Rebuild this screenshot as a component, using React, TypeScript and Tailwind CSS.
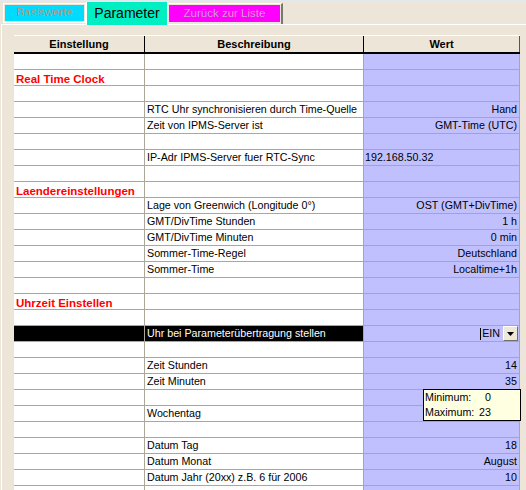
import React from 'react';

type Row =
  | { kind: 'empty' }
  | { kind: 'section'; label: string }
  | { kind: 'item'; label: string; value?: string; left?: boolean }
  | { kind: 'select'; label: string; value: string };

const rows: Row[] = [
  { kind: 'empty' },
  { kind: 'section', label: 'Real Time Clock' },
  { kind: 'empty' },
  { kind: 'item', label: 'RTC Uhr synchronisieren durch Time-Quelle', value: 'Hand' },
  { kind: 'item', label: 'Zeit von IPMS-Server ist', value: 'GMT-Time (UTC)' },
  { kind: 'empty' },
  { kind: 'item', label: 'IP-Adr IPMS-Server fuer RTC-Sync', value: '192.168.50.32', left: true },
  { kind: 'empty' },
  { kind: 'section', label: 'Laendereinstellungen' },
  { kind: 'item', label: 'Lage von Greenwich (Longitude 0°)', value: 'OST (GMT+DivTime)' },
  { kind: 'item', label: 'GMT/DivTime Stunden', value: '1 h' },
  { kind: 'item', label: 'GMT/DivTime Minuten', value: '0 min' },
  { kind: 'item', label: 'Sommer-Time-Regel', value: 'Deutschland' },
  { kind: 'item', label: 'Sommer-Time', value: 'Localtime+1h' },
  { kind: 'empty' },
  { kind: 'section', label: 'Uhrzeit Einstellen' },
  { kind: 'empty' },
  { kind: 'select', label: 'Uhr bei Parameterübertragung stellen', value: 'EIN' },
  { kind: 'empty' },
  { kind: 'item', label: 'Zeit Stunden', value: '14' },
  { kind: 'item', label: 'Zeit Minuten', value: '35' },
  { kind: 'empty' },
  { kind: 'item', label: 'Wochentag', value: '' },
  { kind: 'empty' },
  { kind: 'item', label: 'Datum Tag', value: '18' },
  { kind: 'item', label: 'Datum Monat', value: 'August' },
  { kind: 'item', label: 'Datum Jahr (20xx) z.B. 6 für 2006', value: '10' },
  { kind: 'empty' },
];

function TableRow({ row }: { row: Row }) {
  const dark = row.kind === 'select';
  const first = dark ? 'bg-black' : 'bg-white';
  const second = dark ? 'bg-black text-white' : 'bg-white text-black';

  return (
    <div className="flex h-[16px] border-b border-[#aca899]">
      <div className={`w-[131px] shrink-0 border-r border-[#aca899] pl-[2px] leading-[15px] ${first}`}>
        {row.kind === 'section' && (
          <span className="text-[11.5px] font-bold text-[#ff0000]">{row.label}</span>
        )}
      </div>
      <div className={`w-[219px] shrink-0 border-r border-[#aca899] pl-[2px] text-[10.7px] leading-[15px] whitespace-nowrap overflow-hidden ${second}`}>
        {(row.kind === 'item' || row.kind === 'select') && row.label}
      </div>
      <div className="w-[156px] shrink-0 border-r border-[#aca899] bg-[#c0c0ff] text-[10.7px] leading-[15px]">
        {row.kind === 'item' && (
          <div className={row.left ? 'pl-[1px]' : 'pr-[2px] text-right'}>{row.value}</div>
        )}
        {row.kind === 'select' && (
          <div className="flex h-full items-center justify-end pr-[1px]">
            <span className="mr-px h-[12px] w-px bg-black" />
            <span>{row.value}</span>
            <span className="ml-[3px] flex h-[15px] w-[15px] items-center justify-center border border-t-white border-l-white border-r-[#716f64] border-b-[#716f64] bg-[#ece9d8]">
              <svg width="7" height="4" viewBox="0 0 7 4">
                <polygon points="0,0 7,0 3.5,4" fill="#000" />
              </svg>
            </span>
          </div>
        )}
      </div>
    </div>
  );
}

export default function App() {
  return (
    <div
      className="relative h-[490px] w-[526px] overflow-hidden bg-[#ede5d8] text-black"
      style={{ fontFamily: '"Liberation Sans", Arial, sans-serif' }}
    >
      <div className="h-[2px] bg-[#e2e8ee]" />

      {/* tabs */}
      <div className="flex h-[22px] items-stretch">
        <div className="ml-[3px] mt-px mb-px w-[83px] border border-white p-px">
          <div className="flex h-full items-center justify-center bg-[#00dcff] text-[11.5px] text-[#a89a88]">
            Basiswerte
          </div>
        </div>
        <div className="relative z-10 -mb-px flex w-[81px] items-center justify-center border-l border-white bg-[#00efc2] text-[14px]">
          Parameter
        </div>
        <div className="mt-px w-[116px] border-t border-l border-white border-r-2 border-r-[#7a7870] p-px">
          <div className="flex h-[17px] items-center justify-center bg-[#ff00ff] text-[11.5px] text-[#d49ad0]">
            Zurück zur Liste
          </div>
        </div>
      </div>

      {/* panel */}
      <div className="ml-px border-t border-l border-white pl-[12px] pt-[10px]">
        <div className="w-[506px]">
          <div className="flex h-[19px] border-t border-white border-b-2 border-b-black text-[11px] font-bold leading-[16px]">
            <div className="w-[131px] shrink-0 border-r border-black text-center">Einstellung</div>
            <div className="w-[219px] shrink-0 border-r border-black text-center">Beschreibung</div>
            <div className="w-[156px] shrink-0 border-r border-[#555] text-center">Wert</div>
          </div>
          {rows.map((row, i) => (
            <TableRow key={i} row={row} />
          ))}
        </div>
      </div>

      {/* tooltip */}
      <div className="absolute left-[423px] top-[389px] w-[98px] border border-black bg-[#ffffe1] text-[10.7px] leading-[15px]">
        <div className="flex pl-[1px]">
          <span className="w-[46px] whitespace-nowrap">Minimum:</span>
          <span className="w-[20px] text-right">0</span>
        </div>
        <div className="flex pl-[1px]">
          <span className="w-[46px] whitespace-nowrap">Maximum:</span>
          <span className="w-[20px] text-right">23</span>
        </div>
      </div>
    </div>
  );
}
